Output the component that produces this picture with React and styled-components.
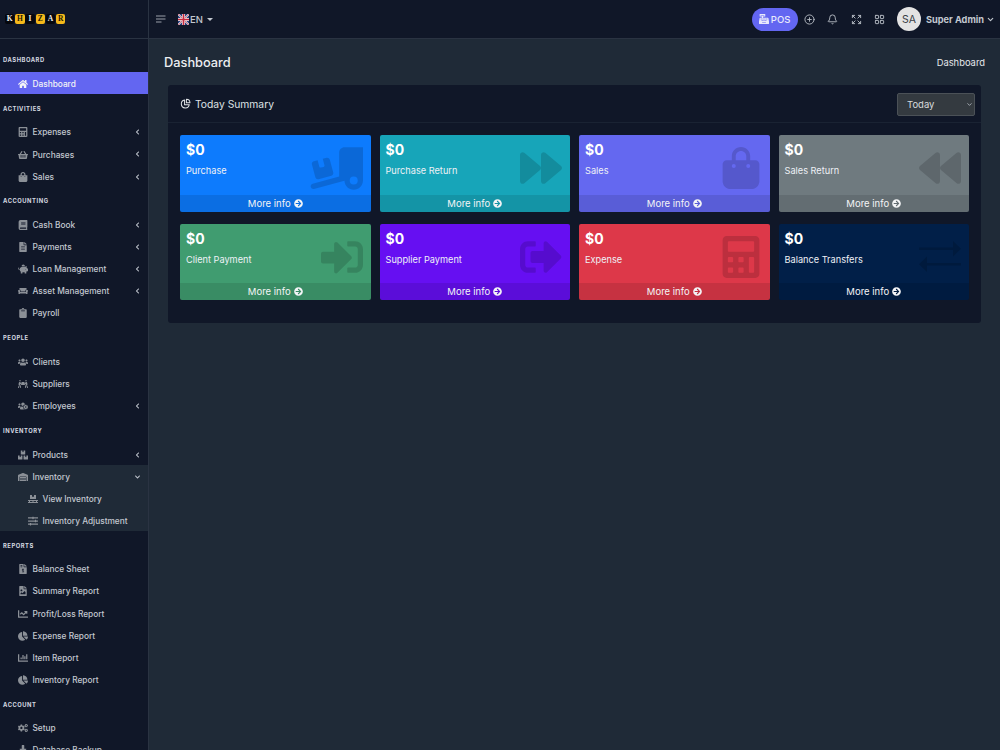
import React from "react";
import styled, { createGlobalStyle } from "styled-components";
import {
  FaHome, FaCalculator, FaShoppingBasket, FaShoppingBag, FaBook, FaFileAlt, FaPiggyBank, FaCouch,
  FaClipboard, FaUsers, FaPeopleCarry, FaUsersCog, FaBoxes, FaWarehouse, FaPallet, FaSlidersH,
  FaFileInvoiceDollar, FaFileImage, FaChartLine, FaChartPie, FaChartBar, FaCogs, FaDownload,
  FaChevronLeft, FaChevronDown, FaForward, FaBackward, FaSignInAlt, FaSignOutAlt,
  FaArrowCircleRight, FaCashRegister,
} from "react-icons/fa";
import { FaTruckRampBox, FaBagShopping } from "react-icons/fa6";
import { Bell, CirclePlus, LayoutGrid, Expand, ChevronDown } from "lucide-react";

const FONT = `Inter, "Liberation Sans", sans-serif`;
const DARK = "#101728";
const SLATE = "#1f2a37";

const GlobalStyle = createGlobalStyle`
  html, body { margin: 0; padding: 0; height: 100%; overflow: hidden; background: ${SLATE}; }
  body { font-family: ${FONT}; }
  * { box-sizing: border-box; }
`;

// thin long arrows, the icon packs only have heavy ones
const TransferIcon = ({ size }) => (
  <svg width={size} height={size} viewBox="0 0 42 42" fill="currentColor">
    <path d="M0 11.5H34V5L42 12.75L34 20.5V14H0Z" />
    <path d="M42 27H8V20.5L0 28.25L8 36V29.5H42Z" />
  </svg>
);

const menu = [
  { title: "Dashboard", items: [{ label: "Dashboard", icon: FaHome, active: true }] },
  {
    title: "Activities",
    items: [
      { label: "Expenses", icon: FaCalculator, arrow: true },
      { label: "Purchases", icon: FaShoppingBasket, arrow: true },
      { label: "Sales", icon: FaShoppingBag, arrow: true },
    ],
  },
  {
    title: "Accounting",
    items: [
      { label: "Cash Book", icon: FaBook, arrow: true },
      { label: "Payments", icon: FaFileAlt, arrow: true },
      { label: "Loan Management", icon: FaPiggyBank, arrow: true },
      { label: "Asset Management", icon: FaCouch, arrow: true },
      { label: "Payroll", icon: FaClipboard },
    ],
  },
  {
    title: "People",
    items: [
      { label: "Clients", icon: FaUsers },
      { label: "Suppliers", icon: FaPeopleCarry },
      { label: "Employees", icon: FaUsersCog, arrow: true },
    ],
  },
  {
    title: "Inventory",
    items: [
      { label: "Products", icon: FaBoxes, arrow: true },
      {
        label: "Inventory",
        icon: FaWarehouse,
        children: [
          { label: "View Inventory", icon: FaPallet },
          { label: "Inventory Adjustment", icon: FaSlidersH },
        ],
      },
    ],
  },
  {
    title: "Reports",
    items: [
      { label: "Balance Sheet", icon: FaFileInvoiceDollar },
      { label: "Summary Report", icon: FaFileImage },
      { label: "Profit/Loss Report", icon: FaChartLine },
      { label: "Expense Report", icon: FaChartPie },
      { label: "Item Report", icon: FaChartBar },
      { label: "Inventory Report", icon: FaChartPie },
    ],
  },
  {
    title: "Account",
    items: [
      { label: "Setup", icon: FaCogs },
      { label: "Database Backup", icon: FaDownload },
    ],
  },
];

const cards = [
  { label: "Purchase", color: "#0d7bfd", icon: FaTruckRampBox, size: 53 },
  { label: "Purchase Return", color: "#17a5b9", icon: FaForward, size: 42 },
  { label: "Sales", color: "#6468f0", icon: FaBagShopping, size: 42 },
  { label: "Sales Return", color: "#6f7a7f", icon: FaBackward, size: 42 },
  { label: "Client Payment", color: "#409c70", icon: FaSignInAlt, size: 42 },
  { label: "Supplier Payment", color: "#660ff2", icon: FaSignOutAlt, size: 42 },
  { label: "Expense", color: "#dd3849", icon: FaCalculator, size: 42 },
  { label: "Balance Transfers", color: "#011f48", icon: TransferIcon, size: 42 },
];

const logoLetters = ["K", "H", "I", "Z", "A", "R"];

const Shell = styled.div`
  display: flex;
  height: 750px;
  overflow: hidden;
  color: #e5e7eb;
`;

const Sidebar = styled.aside`
  width: 149px;
  flex: none;
  height: 750px;
  overflow: hidden;
  background: ${DARK};
  border-right: 1px solid #2a3342;
`;

const Brand = styled.div`
  height: 39px;
  display: flex;
  align-items: center;
  gap: 0.8px;
  padding-left: 5px;
  border-bottom: 1px solid #2a3342;
`;

const Tile = styled.span`
  width: 9.4px;
  height: 9.6px;
  display: flex;
  align-items: center;
  justify-content: center;
  border-radius: 2px;
  background: ${(p) => (p.$gold ? "#f6b91a" : "#05070d")};
  color: ${(p) => (p.$gold ? "#241a02" : "#f2f2f2")};
  font-family: "Liberation Serif", serif;
  font-weight: 700;
  font-size: 7.5px;
  line-height: 1;
`;

const Nav = styled.nav`
  padding-top: 7px;
`;

const SectionTitle = styled.div`
  height: 26.4px;
  padding: 1px 0 0 3px;
  display: flex;
  align-items: center;
  font-size: 5.8px;
  font-weight: 700;
  letter-spacing: 0.55px;
  text-transform: uppercase;
  color: #d5d9e0;
`;

const OpenGroup = styled.div`
  background: ${SLATE};
`;

const Item = styled.div`
  position: relative;
  height: 22.1px;
  display: flex;
  align-items: center;
  padding: 1px 0 0 ${(p) => (p.$sub ? "27px" : "17px")};
  background: ${(p) => (p.$active ? "#6366f1" : "transparent")};
  color: ${(p) => (p.$active ? "#f3f4f6" : "#c3c8d0")};
  font-size: 8.3px;
  font-weight: 500;
`;

const ItemIcon = styled.span`
  width: 11px;
  margin-right: 4.5px;
  display: flex;
  justify-content: center;
  color: ${(p) => (p.$active ? "#f3f4f6" : "#8b9097")};
  svg { width: 10px; height: 10px; }
`;

const Arrow = styled.span`
  position: absolute;
  right: 8.5px;
  top: 8.5px;
  display: flex;
  color: #c3c8d0;
  svg { width: 5px; height: 6px; }
`;

const Main = styled.main`
  flex: 1;
  min-width: 0;
  background: ${SLATE};
`;

const Topbar = styled.header`
  height: 39px;
  display: flex;
  align-items: center;
  padding: 0 5px 0 7px;
  background: ${DARK};
  border-bottom: 1px solid #2a3342;
`;

const Lang = styled.div`
  display: flex;
  align-items: center;
  margin-left: 12px;
  font-size: 9.5px;
  font-weight: 500;
  color: #c3c8d0;
`;

const LangCode = styled.span`
  margin-left: 1px;
`;

const Caret = styled.span`
  width: 0;
  height: 0;
  margin-left: 4px;
  border-left: 3px solid transparent;
  border-right: 3px solid transparent;
  border-top: 3px solid #c3c8d0;
`;

const Spacer = styled.div`
  flex: 1;
`;

const PosButton = styled.button`
  width: 46px;
  height: 23px;
  border: 0;
  padding: 0;
  border-radius: 12px;
  background: #6366f1;
  color: #e8e9fb;
  display: flex;
  align-items: center;
  justify-content: center;
  gap: 2px;
  font-family: ${FONT};
  font-size: 9.5px;
  font-weight: 500;
`;

const ToolIcon = styled.span`
  width: 23.5px;
  display: flex;
  justify-content: center;
  color: #b9bec6;
`;

const Avatar = styled.div`
  width: 24px;
  height: 24px;
  margin-left: 5.5px;
  border-radius: 50%;
  background: #e3e3e3;
  color: #3a3f47;
  display: flex;
  align-items: center;
  justify-content: center;
  font-size: 10.5px;
`;

const UserName = styled.div`
  margin-left: 5px;
  display: flex;
  align-items: center;
  gap: 2px;
  font-size: 9.2px;
  font-weight: 700;
  color: #c3c8d0;
  white-space: nowrap;
`;

const PageHead = styled.div`
  height: 46px;
  padding: 0 15px;
  display: flex;
  align-items: center;
  justify-content: space-between;
`;

const PageTitle = styled.h1`
  margin: 0;
  font-size: 12.8px;
  font-weight: 500;
  color: #eceef1;
`;

const Crumb = styled.div`
  font-size: 9.4px;
  color: #e5e7eb;
`;

const Panel = styled.section`
  margin: 0 19px;
  background: ${DARK};
  border-radius: 3px;
`;

const PanelHead = styled.div`
  height: 38px;
  padding: 0 6px 0 12px;
  display: flex;
  align-items: center;
  justify-content: space-between;
  border-bottom: 1px solid #1a2333;
`;

const PanelTitle = styled.div`
  display: flex;
  align-items: center;
  gap: 4px;
  font-size: 10.3px;
  color: #dfe2e6;
`;

const SelectWrap = styled.div`
  position: relative;
  width: 78px;
  height: 23px;
  svg { position: absolute; right: 2px; top: 9px; color: #c3c8d0; pointer-events: none; }
`;

const Select = styled.select`
  width: 100%;
  height: 100%;
  appearance: none;
  padding: 0 0 0 9px;
  border: 1px solid #4b5157;
  border-radius: 2px;
  background: #343a40;
  color: #d8dbde;
  font-family: ${FONT};
  font-size: 9.5px;
`;

const CardGrid = styled.div`
  display: grid;
  grid-template-columns: repeat(4, 1fr);
  gap: 12px 9px;
  padding: 12px 12px 23px;
`;

const Card = styled.div`
  position: relative;
  height: 76.5px;
  overflow: hidden;
  border-radius: 2px;
  background: ${(p) => p.$color};
  color: #fff;
  display: flex;
  flex-direction: column;
`;

const CardBody = styled.div`
  flex: 1;
  padding: 6px 6px 0;
`;

const Amount = styled.div`
  font-size: 14px;
  line-height: 17px;
  font-weight: 700;
`;

const CardLabel = styled.div`
  margin-top: 7px;
  font-size: 9.2px;
  line-height: 12px;
  color: #eef1f6;
`;

const CardIcon = styled.span`
  position: absolute;
  right: 8px;
  top: 12px;
  height: 42px;
  display: flex;
  align-items: center;
  color: rgba(0, 0, 0, 0.15);
`;

const CardFoot = styled.div`
  height: 17px;
  display: flex;
  align-items: center;
  justify-content: center;
  gap: 3px;
  background: rgba(0, 0, 0, 0.1);
  font-size: 9.5px;
  color: #f3f4f6;
`;

const UkFlag = () => (
  <svg width="11" height="11" viewBox="0 0 22 22">
    <rect width="22" height="22" fill="#28407e" />
    <path d="M0 0L22 22M22 0L0 22" stroke="#eee" strokeWidth="3.4" />
    <path d="M0 0L22 22M22 0L0 22" stroke="#c8283e" strokeWidth="1.2" />
    <path d="M11 0V22M0 11H22" stroke="#eee" strokeWidth="6" />
    <path d="M11 0V22M0 11H22" stroke="#c8283e" strokeWidth="3.4" />
  </svg>
);

const MenuLines = () => (
  <svg width="10" height="8" viewBox="0 0 10 8" fill="none" stroke="#9aa0a9" strokeWidth="1">
    <path d="M0 1H9.5M0 4H9.5M0 7H5.5" />
  </svg>
);

const PieLine = () => (
  <svg width="11" height="11" viewBox="0 0 24 24" fill="none" stroke="currentColor" strokeWidth="2.2" strokeLinejoin="round">
    <path d="M10 4.2A8.8 8.8 0 1 0 20.3 14.5H10Z" />
    <path d="M14 2.5A8 8 0 0 1 21.8 10.5H14Z" />
  </svg>
);

const MenuItem = ({ item, sub }) => {
  const Icon = item.icon;
  return (
    <Item $active={item.active} $sub={sub}>
      <ItemIcon $active={item.active}>
        <Icon />
      </ItemIcon>
      {item.label}
      {item.arrow && (
        <Arrow>
          <FaChevronLeft />
        </Arrow>
      )}
      {item.children && (
        <Arrow>
          <FaChevronDown />
        </Arrow>
      )}
    </Item>
  );
};

const App = () => {
  return (
    <Shell>
      <GlobalStyle />
      <Sidebar>
        <Brand>
          {logoLetters.map((l, i) => (
            <Tile key={i} $gold={i % 2 === 1}>
              {l}
            </Tile>
          ))}
        </Brand>
        <Nav>
          {menu.map((section) => (
            <div key={section.title}>
              <SectionTitle>{section.title}</SectionTitle>
              {section.items.map((item) =>
                item.children ? (
                  <OpenGroup key={item.label}>
                    <MenuItem item={item} />
                    {item.children.map((c) => (
                      <MenuItem key={c.label} item={c} sub />
                    ))}
                  </OpenGroup>
                ) : (
                  <MenuItem key={item.label} item={item} />
                )
              )}
            </div>
          ))}
        </Nav>
      </Sidebar>
      <Main>
        <Topbar>
          <MenuLines />
          <Lang>
            <UkFlag />
            <LangCode>EN</LangCode>
            <Caret />
          </Lang>
          <Spacer />
          <PosButton>
            <FaCashRegister size={10} />
            POS
          </PosButton>
          <ToolIcon>
            <CirclePlus size={11} />
          </ToolIcon>
          <ToolIcon>
            <Bell size={11} />
          </ToolIcon>
          <ToolIcon>
            <Expand size={11} />
          </ToolIcon>
          <ToolIcon>
            <LayoutGrid size={11} />
          </ToolIcon>
          <Avatar>SA</Avatar>
          <UserName>
            Super Admin
            <ChevronDown size={9} strokeWidth={3} />
          </UserName>
        </Topbar>
        <PageHead>
          <PageTitle>Dashboard</PageTitle>
          <Crumb>Dashboard</Crumb>
        </PageHead>
        <Panel>
          <PanelHead>
            <PanelTitle>
              <PieLine />
              Today Summary
            </PanelTitle>
            <SelectWrap>
              <Select defaultValue="Today">
                <option>Today</option>
              </Select>
              <ChevronDown size={7} strokeWidth={2.5} />
            </SelectWrap>
          </PanelHead>
          <CardGrid>
            {cards.map((card) => {
              const Icon = card.icon;
              return (
                <Card key={card.label} $color={card.color}>
                  <CardBody>
                    <Amount>$0</Amount>
                    <CardLabel>{card.label}</CardLabel>
                  </CardBody>
                  <CardIcon>
                    <Icon size={card.size} />
                  </CardIcon>
                  <CardFoot>
                    More info <FaArrowCircleRight size={9} />
                  </CardFoot>
                </Card>
              );
            })}
          </CardGrid>
        </Panel>
      </Main>
    </Shell>
  );
};

export default App;
